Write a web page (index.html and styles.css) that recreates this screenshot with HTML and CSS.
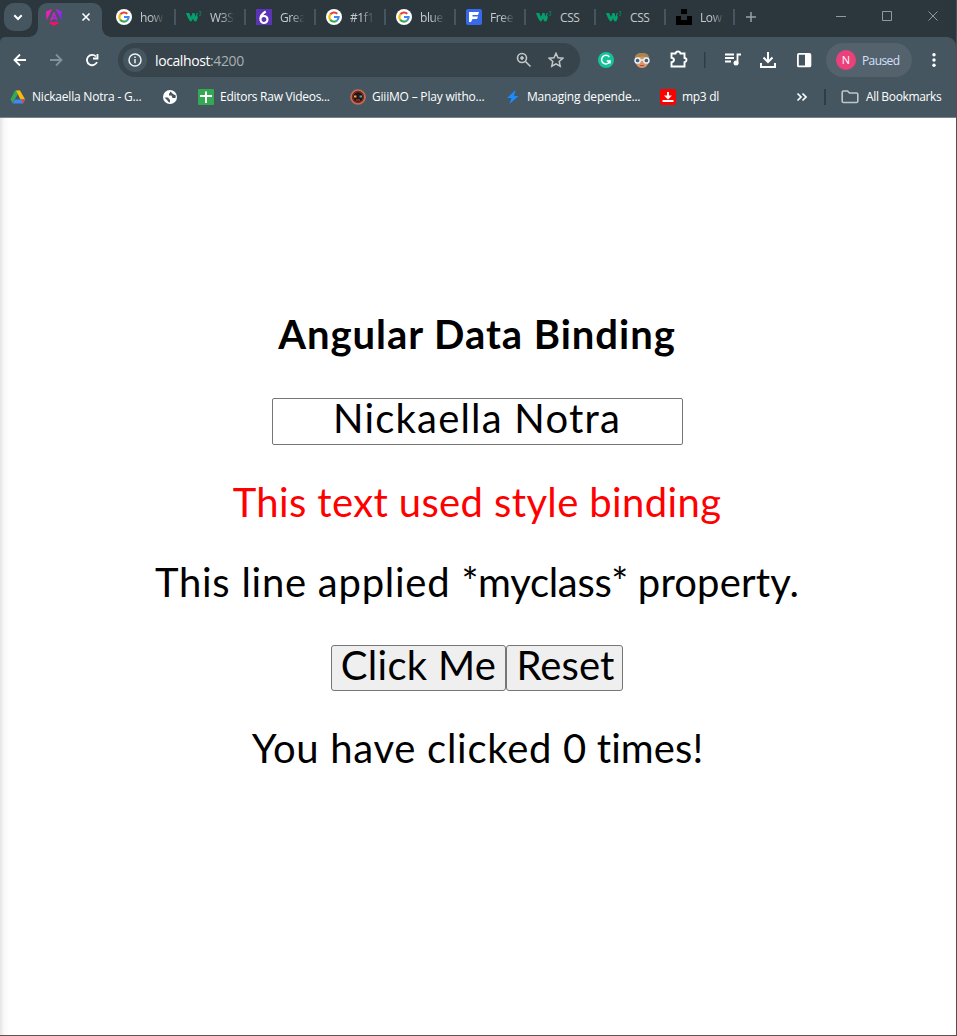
FILE: index.html
```html
<!DOCTYPE html>
<html lang="en">
<head>
<meta charset="utf-8">
<title>Angular Data Binding</title>
<link rel="stylesheet" href="styles.css">
</head>
<body>
<svg class="defs" width="0" height="0">
  <defs>
    <linearGradient id="ng" x1="0" y1="0.2" x2="1" y2="0.5"><stop offset="0" stop-color="#f51fb0"/><stop offset=".5" stop-color="#e01bd0"/><stop offset="1" stop-color="#7a2bf5"/></linearGradient>
    <symbol id="google" viewBox="0 0 16 16">
      <circle cx="8" cy="8" r="8" fill="#fff"/>
      <g fill="none" stroke-width="2.1">
        <path d="M4.3 5.4A4.6 4.6 0 0 1 11.3 4.8" stroke="#ea4335"/>
        <path d="M4.3 5.3A4.6 4.6 0 0 0 4.3 10.7" stroke="#fbbc05"/>
        <path d="M4.2 10.6A4.6 4.6 0 0 0 11 11.5" stroke="#34a853"/>
        <path d="M8 8H12.6A4.6 4.6 0 0 1 11 11.5" stroke="#4285f4"/>
      </g>
    </symbol>
    <symbol id="w3" viewBox="0 0 16 16">
      <path d="M0 4H3.200L5 8 6.500 4H8.500L9.600 7.800 10.600 4H12L11 6.200Q12.300 7 11.600 9.500Q11 12 9.500 12.600Q7.600 12.200 7 9.400Q6 12.200 4.600 12.600Q2.400 11 0 4Z" fill="#04a06b"/>
      <path d="M12.800 2.600H15L13.800 4.300Q15.200 4.400 15 5.800Q14.200 7 12.800 6.200" fill="none" stroke="#067f5c" stroke-width=".9"/>
    </symbol>
  </defs>
</svg>
<div class="window">
  <header class="chrome">
    <div class="tabstrip">
      <div class="search-tabs"><svg width="28" height="28" fill="none" stroke="#fff" stroke-width="2"><path d="M10.300 12.300 14 16l3.700-3.700"/></svg></div>
      <div class="tab-active">
        <svg class="fav" width="16" height="17" viewBox="0 0 16 17"><path fill="url(#ng)" d="M6.200 0 0 2.500.7 11.300zM9.800 0 16 2.500l-.7 8.800zM8 2.500 12 11.500H10L9.300 10H6.700L6 11.500H4zM8 6 7 8.500H9z" fill-rule="evenodd"/><path fill="#f41266" d="M4 13h8l.7 1.400L8 16.800l-4.700-2.400z"/></svg>
        <svg class="close" width="10" height="10" fill="none" stroke="#fff" stroke-width="1.600"><path d="m1.500 1.500 7 7m0-7-7 7"/></svg>
      </div>
      <div class="tab"><svg width="16" height="16"><use href="#google"/></svg><span>how</span></div>
      <div class="tab"><svg width="16" height="16"><use href="#w3"/></svg><span>W3S</span></div>
      <div class="tab"><svg width="16" height="16"><path d="M0 0h16v16H0z" fill="#5b34b5"/><path d="M9.700 2.500Q4.300 6 4.500 10a3.500 3.500 0 1 0 3.500-3Q6 7 5 8.500" fill="none" stroke="#fff" stroke-width="2.200"/></svg><span>Grea</span></div>
      <div class="tab"><svg width="16" height="16"><use href="#google"/></svg><span>#1f1</span></div>
      <div class="tab"><svg width="16" height="16"><use href="#google"/></svg><span>blue</span></div>
      <div class="tab"><svg width="16" height="16"><rect width="16" height="16" rx="2" fill="#3769ea"/><path d="M3 3h10l-1 3H6.500v1.500H12l-1 2.500H6.500L5 13H3z" fill="#fff"/></svg><span>Free</span></div>
      <div class="tab"><svg width="16" height="16"><use href="#w3"/></svg><span class="full">CSS</span></div>
      <div class="tab"><svg width="16" height="16"><use href="#w3"/></svg><span class="full">CSS</span></div>
      <div class="tab"><svg width="16" height="16"><path d="M5 0h6v5H5zM0 7h5v4h6V7h5v9H0z"/></svg><span>Low</span></div>
      <svg class="plus" width="12" height="12" stroke="#98a1a6" stroke-width="1.500"><path d="M6 1v10M1 6h10"/></svg>
      <svg class="controls" width="104" height="12" fill="none" stroke="#94999c"><path d="M0 6.500h10M46.500 1.500h9v9h-9zM92.500 1.500l9 9m0-9-9 9"/></svg>
    </div>
    <div class="toolbar">
      <svg class="nav" width="100" height="20" fill="none" stroke-width="1.800"><g stroke="#fff"><path d="M14 10H3M8 4.500 2.500 10 8 15.500"/><path d="M84 6.500A5.200 5.200 0 1 0 85 12M85.500 4v4.500H81"/></g><path stroke="#84919a" d="M38 10h11m-5-5.500 5.500 5.500L44 15.500"/></svg>
      <div class="omnibox">
        <div class="info"><svg width="14" height="14" fill="none" stroke="#eef0f1" stroke-width="1.500"><circle cx="7" cy="7" r="6"/><path d="M7 6v4.300M7 3.500V5"/></svg></div>
        <span class="url">localhost<i>:4200</i></span>
        <svg class="zoom" width="16" height="16" fill="none" stroke="#c3c7c9" stroke-width="1.600"><circle cx="6" cy="6" r="4.500"/><path d="m9.500 9.500 5 5M6 4v4M4 6h4"/></svg>
        <svg width="16" height="16" fill="none" stroke="#c3c7c9" stroke-width="1.500"><path d="m8 1.300 2 4.400 4.800.5-3.600 3.200 1 4.800L8 11.800l-4.200 2.400 1-4.800L1.200 6.200 6 5.700z"/></svg>
      </div>
      <svg class="ext" width="190" height="20" viewBox="597 50 190 20">
        <circle cx="606" cy="60" r="8" fill="#15c39a"/><path d="M609.300 57A4.300 4.300 0 1 0 610 61H606.800M610 60.500v3" fill="none" stroke="#fff" stroke-width="1.500"/>
        <path d="M635 59q0-6 7-6t7 6l-1 5q-2 4-6 4t-6-4z" fill="#da946b"/><path d="M635 58q0-5 7-5t7 5q-6-3-14 0z" fill="#a6854e"/><g fill="#4d5c75" stroke="#e8f1f5" stroke-width="1.500"><circle cx="637.600" cy="60.500" r="2.600"/><circle cx="646.400" cy="60.500" r="2.600"/><path d="M640.500 60h3"/></g><path d="M640 65.500h4" stroke="#aa4c42"/>
        <path d="M671.500 53.500h4q.5-2 2.500-2t2.500 2h4v4.500q2 .3 2 2t-2 2.200v4.300h-13v-4.300q2.500-.5 2.500-2.200t-2.500-2.200z" fill="none" stroke="#fff" stroke-width="1.900"/>
        <path d="M704 52h1.500v16H704z" fill="#303d44"/>
        <path d="M725 54.500h9M725 58h9M725 61.500h6M737.500 63.500V54.500H741" fill="none" stroke="#fff" stroke-width="1.800"/><circle cx="736" cy="63" r="2.500" fill="#fff"/>
        <path d="M768 52v10M763.500 57.500 768 62l4.500-4.500M761 63v4h14v-4" fill="none" stroke="#fff" stroke-width="2"/>
      </svg>
      <svg class="panel" width="16" height="16"><rect x="1.900" y="1.900" width="12.500" height="12.500" rx="1" fill="none" stroke="#fff" stroke-width="1.800"/><path d="M9 2h5v12H9z" fill="#fff"/></svg>
      <div class="profile"><b>N</b><span>Paused</span></div>
      <svg class="dots" width="4" height="16" fill="#fff"><circle cx="2" cy="2.700" r="1.700"/><circle cx="2" cy="8" r="1.700"/><circle cx="2" cy="13.300" r="1.700"/></svg>
    </div>
    <div class="bookmarks">
      <div class="bm drive"><svg width="16" height="16"><path d="M5 1.500h5L5 10l-2.500 4L.5 10.500z" fill="#34a853"/><path d="M6 1.500h4l5.200 9H10.500z" fill="#fbbc05"/><path d="M5 10.500h10.300L13 14.500H2.500z" fill="#4285f4"/><path d="M11.200 10.500h4L13 14.500z" fill="#ea4335"/></svg><span>Nickaella Notra - G...</span></div>
      <div class="bm globe"><svg width="16" height="16"><circle cx="8" cy="8" r="7" fill="#fff"/><path d="M2.500 8.500 6 8.500 8 11v2.500L6.500 13 5 11zM8.500 2.500 7 5v1.500h2.500L10.500 9h3l.3-2.500L11 5z" fill="#455660"/></svg></div>
      <div class="bm sheet"><svg width="16" height="16"><rect width="16" height="16" rx="1" fill="#34a853"/><path d="M7 2.500h2V6h5v2H9v6H7V8H2V6h5z" fill="#fff"/></svg><span>Editors Raw Videos...</span></div>
      <div class="bm giii"><svg width="16" height="16"><circle cx="8" cy="8" r="7" fill="#521713" stroke="#c76b57" stroke-width="1.700"/><circle cx="8" cy="8" r="5.300" fill="#241414" stroke="#8c3428"/><path d="M4 7.500h2.500" stroke="#ff9f32" stroke-width="2"/><path d="M9.500 7.500H12" stroke="#43a6a4" stroke-width="2"/><path d="M6 11h4" stroke="#c14d3c"/></svg><span>GiiiMO – Play witho...</span></div>
      <div class="bm flash"><svg width="12" height="16"><path d="M8.500 1 0 9h4.500L2.500 15 11.500 7H7z" fill="#1b8cff"/></svg><span>Managing depende...</span></div>
      <div class="bm mp3"><svg width="16" height="16"><rect width="16" height="16" rx="2" fill="#f00"/><path d="M7 3h2v3.500h3L8 10.500 4 6.500h3zM2.500 11h11v2h-11z" fill="#fff"/></svg><span>mp3 dl</span></div>
      <svg class="more" width="12" height="10" fill="none" stroke="#fff" stroke-width="1.700"><path d="m1.500 1.500 3.500 3.500-3.500 3.500M6.500 1.500 10 5 6.500 8.500"/></svg>
      <div class="sep"></div>
      <div class="bm all"><svg width="18" height="14" fill="none" stroke="#c1c6c9" stroke-width="1.600"><path d="M2.500 1h4l2 2h7q1.300 0 1.300 1.300v7q0 1.200-1.300 1.200h-13Q1.200 12.500 1.200 11.200V2.300Q1.200 1 2.500 1z"/></svg><span>All Bookmarks</span></div>
    </div>
  </header>
  <main class="page">
    <h1 class="title">Angular Data Binding</h1>
    <input class="name" value="Nickaella Notra">
    <p class="styled">This text used style binding</p>
    <p class="classed"><span class="loose">This line applied </span><span class="tight">*myclass* </span>property.</p>
    <div class="buttons"><button class="click">Click Me</button><button class="reset">Reset</button></div>
    <p class="count"><span class="loose">You have clicked </span>0 times!</p>
  </main>
</div>
</body>
</html>
```
FILE: styles.css
```css
* { box-sizing: border-box; }
body { margin: 0; background: #fff; font-family: "Open Sans", "Noto Sans", sans-serif; }
svg { display: block; flex: none; }
.defs { position: absolute; }
.window { width: 957px; height: 1036px; overflow: hidden; display: flex; flex-direction: column; border-right: 1px solid #5c4c4e; border-bottom: 1px solid #684e50; }
.chrome { height: 118px; flex: none; background: #2c373d; border-bottom: 1px solid #78848c; }
.tabstrip { height: 37px; background: #2c373d; display: flex; }
.search-tabs { width: 28px; height: 28px; margin: 3px 6px 0 4px; border-radius: 10px; background: #455660; }
.tab-active { position: relative; width: 64px; height: 34px; margin-top: 3px; background: #455660; border-radius: 9px 9px 0 0; display: flex; padding: 6px 11px 0 8px; justify-content: space-between; }
.tab-active::before, .tab-active::after { content: ""; position: absolute; bottom: 0; width: 9px; height: 9px; }
.tab-active::before { left: -9px; background: radial-gradient(circle at 0 0, transparent 8.5px, #455660 9px); }
.tab-active::after { right: -9px; background: radial-gradient(circle at 100% 0, transparent 8.5px, #455660 9px); }
.close { margin-top: 3px; }
.tab { width: 70px; height: 37px; padding: 9px 0 0 14px; display: flex; background: linear-gradient(#455660, #455660) 2px 9px / 2px 16px no-repeat; }
.tab-active + .tab { background: none; }
.tab span { margin-left: 8px; width: 28px; height: 17px; line-height: 17px; white-space: nowrap; font-size: 12px; letter-spacing: -.4px; color: #c4cacd; -webkit-mask-image: linear-gradient(90deg, #000 40%, transparent 88%); mask-image: linear-gradient(90deg, #000 40%, transparent 88%); }
.tab .full { -webkit-mask-image: none; mask-image: none; }
.plus { margin-top: 11px; }
.tab:nth-child(11) { width: 83px; background-image: linear-gradient(#455660, #455660), linear-gradient(#455660, #455660); background-position: 2px 9px, 71px 9px; }
.controls { margin: 10px 0 0 79px; }
.toolbar { height: 46px; display: flex; align-items: center; background: #455660; border-radius: 5px 9px 0 0; }
.nav { margin-left: 12px; }
.omnibox { width: 462px; height: 34px; margin-left: 6px; padding: 0 16px 0 5px; border-radius: 17px; background: #37444b; display: flex; align-items: center; }
.info { width: 24px; height: 24px; border-radius: 50%; background: #455660; display: grid; place-items: center; }
.url { margin-left: 8px; font-size: 14px; letter-spacing: -.4px; color: #fff; }
.url i { font-style: normal; color: #a9b0b4; }
.zoom { margin: 0 16px 0 auto; }
.ext { margin-left: 17px; }
.panel { margin-left: 9px; }
.profile { width: 86px; height: 34px; margin-left: 14px; border-radius: 17px; background: #53626c; display: flex; align-items: center; padding-left: 10px; }
.profile b { width: 20px; height: 20px; border-radius: 50%; background: #ec407a; color: #fff; font-size: 11px; line-height: 20px; font-weight: 400; text-align: center; }
.profile span { margin-left: 6px; font-size: 12px; letter-spacing: -.6px; color: #d5e0ff; }
.dots { margin-left: 20px; }
.bookmarks { height: 34px; padding: 0 0 6px 10px; display: flex; align-items: center; background: #455660; }
.bm { display: flex; align-items: center; flex: none; white-space: nowrap; font-size: 12px; line-height: 18px; letter-spacing: -.2px; color: #fff; }
.bm span { margin-left: 6px; }
.drive { width: 152px; }
.globe { width: 36px; }
.sheet { width: 152px; letter-spacing: -.27px; }
.giii { width: 157px; }
.flash { width: 153px; }
.flash span { margin-left: 8px; }
.mp3 { width: 136px; letter-spacing: -.3px; }
.sep { width: 2px; height: 16px; margin: 0 15px 0 16px; background: #303d44; }
.all { letter-spacing: -.35px; }
.all span { margin-left: 7px; }
.page { flex: 1; background: linear-gradient(90deg, #e4e4e4, #f8f8f8 4px, #fff 10px); display: flex; flex-direction: column; align-items: center; font-family: Lato, sans-serif; font-size: 40px; font-variant-ligatures: none; color: #000; padding: 193px 2px 0 0; }
.page p, .title { margin: 0; height: 46px; line-height: 46px; white-space: pre; }
.title { font-size: 40px; font-weight: 700; letter-spacing: .97px; }
.name { width: 411px; height: 47px; margin: 41px 0 0; padding: 0 0 7px; border: 1px solid #767676; border-radius: 2px; font: inherit; letter-spacing: 1.2px; text-align: center; }
.page .styled { margin-top: 34px; color: red; letter-spacing: .37px; }
.page .classed { margin-top: 34px; letter-spacing: .15px; }
.classed .loose { letter-spacing: .75px; }
.classed .tight { letter-spacing: -.3px; }
.buttons { display: flex; margin-top: 40px; }
.buttons button { height: 46px; padding: 0 0 5px; border: 1px solid #767676; border-radius: 3px; background: #efefef; font: inherit; line-height: 39px; white-space: nowrap; }
.buttons .click { width: 175px; letter-spacing: .3px; }
.buttons .reset { width: 117px; padding-left: 2px; letter-spacing: .1px; }
.page .count { margin-top: 34px; padding-left: 1px; letter-spacing: .1px; }
.count .loose { letter-spacing: .72px; }
```
